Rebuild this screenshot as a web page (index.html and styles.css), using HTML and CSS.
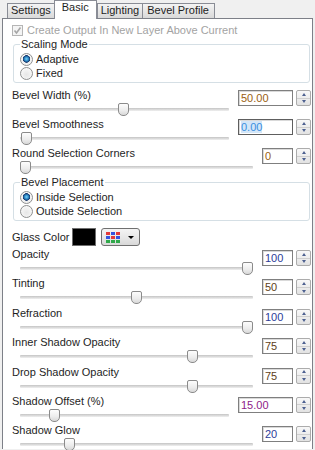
FILE: index.html
```html
<!DOCTYPE html>
<html lang="en">
  <head>
    <meta charset="UTF-8">
    <title>Glass Bevel - Basic</title>
    <link rel="stylesheet" href="styles.css">
  </head>
  <body>
    <div class="tabs">
      <div class="tab">Settings</div>
      <div class="tab tab-active">Basic</div>
      <div class="tab">Lighting</div>
      <div class="tab">Bevel Profile</div>
    </div>

    <div class="panel">
      <div class="check disabled">
        <span class="checkbox">
          <svg width="9" height="9" viewBox="0 0 9 9"><polyline points="1.5,4.5 3.5,7 7.5,1.5" fill="none" stroke="#a6a6a6" stroke-width="1.6"/></svg>
        </span>
        Create Output In New Layer Above Current
      </div>

      <fieldset class="group">
        <legend>Scaling Mode</legend>
        <div class="radio-row"><span class="radio on"></span>Adaptive</div>
        <div class="radio-row"><span class="radio"></span>Fixed</div>
      </fieldset>

      <div class="field">
        <div class="label">Bevel Width (%)</div>
        <div class="slider"><div class="track"></div><span class="thumb" style="left: 98px"></span></div>
        <div class="spin"><div class="num wide c-orange">50.00</div><div class="updown"><span class="up"></span><span class="down"></span></div></div>
      </div>
      <div class="field">
        <div class="label">Bevel Smoothness</div>
        <div class="slider"><div class="track"></div><span class="thumb" style="left: 1px"></span></div>
        <div class="spin"><div class="num wide focus"><span class="sel">0.00</span></div><div class="updown"><span class="up"></span><span class="down"></span></div></div>
      </div>
      <div class="field">
        <div class="label">Round Selection Corners</div>
        <div class="slider"><div class="track"></div><span class="thumb" style="left: 0px"></span></div>
        <div class="spin"><div class="num c-orange">0</div><div class="updown"><span class="up"></span><span class="down"></span></div></div>
      </div>

      <fieldset class="group group-placement">
        <legend>Bevel Placement</legend>
        <div class="radio-row"><span class="radio on"></span>Inside Selection</div>
        <div class="radio-row"><span class="radio"></span>Outside Selection</div>
      </fieldset>

      <div class="color-row">
        <span class="color-label">Glass Color</span>
        <span class="swatch"></span>
        <span class="picker">
          <span class="palette">
            <i class="r"></i><i class="b"></i><i class="r"></i>
            <i class="b"></i><i class="r"></i><i class="b"></i>
            <i class="g"></i><i class="g"></i><i class="g"></i>
          </span>
          <span class="caret"></span>
        </span>
      </div>

      <div class="field field-low">
        <div class="label">Opacity</div>
        <div class="slider"><div class="track"></div><span class="thumb" style="left: 222px"></span></div>
        <div class="spin"><div class="num c-blue">100</div><div class="updown"><span class="up"></span><span class="down"></span></div></div>
      </div>
      <div class="field field-low">
        <div class="label">Tinting</div>
        <div class="slider"><div class="track"></div><span class="thumb" style="left: 111px"></span></div>
        <div class="spin"><div class="num c-brown">50</div><div class="updown"><span class="up"></span><span class="down"></span></div></div>
      </div>
      <div class="field field-low">
        <div class="label">Refraction</div>
        <div class="slider"><div class="track"></div><span class="thumb" style="left: 222px"></span></div>
        <div class="spin"><div class="num c-blue">100</div><div class="updown"><span class="up"></span><span class="down"></span></div></div>
      </div>
      <div class="field field-low">
        <div class="label">Inner Shadow Opacity</div>
        <div class="slider"><div class="track"></div><span class="thumb" style="left: 167px"></span></div>
        <div class="spin"><div class="num c-brown">75</div><div class="updown"><span class="up"></span><span class="down"></span></div></div>
      </div>
      <div class="field field-low">
        <div class="label">Drop Shadow Opacity</div>
        <div class="slider"><div class="track"></div><span class="thumb" style="left: 167px"></span></div>
        <div class="spin"><div class="num c-brown">75</div><div class="updown"><span class="up"></span><span class="down"></span></div></div>
      </div>
      <div class="field field-low">
        <div class="label">Shadow Offset (%)</div>
        <div class="slider"><div class="track"></div><span class="thumb" style="left: 29px"></span></div>
        <div class="spin"><div class="num wide c-magenta">15.00</div><div class="updown"><span class="up"></span><span class="down"></span></div></div>
      </div>
      <div class="field field-low">
        <div class="label">Shadow Glow</div>
        <div class="slider"><div class="track"></div><span class="thumb" style="left: 44px"></span></div>
        <div class="spin"><div class="num c-blue">20</div><div class="updown"><span class="up"></span><span class="down"></span></div></div>
      </div>
    </div>
  </body>
</html>
```

FILE: styles.css
```css
body {
  margin: 0;
  width: 315px;
  height: 450px;
  overflow: hidden;
  background-color: #f0f0f0;
  font-family: "Liberation Sans", Arial, sans-serif;
  font-size: 11px;
  color: #1e1e1e;
}

/* tab strip */
.tabs {
  display: flex;
  align-items: flex-end;
  height: 18px;
  padding-left: 7px;
  position: relative;
  z-index: 1;
}

.tab {
  height: 14px;
  line-height: 12px;
  padding: 0 3px;
  margin-right: -1px;
  border: 1px solid #898c95;
  border-bottom: none;
  background: linear-gradient(#f4f4f4, #e6e6e6 50%, #d9d9d9);
  white-space: nowrap;
}

.tab:last-child {
  padding: 0 5px 0 4px;
}

.tab-active {
  height: 18px;
  margin: 0 0 -1px 0;
  padding: 0 7px;
  background: #ffffff;
  position: relative;
}

/* page body */
.panel {
  margin: 0 2px;
  height: 431px;
  box-sizing: border-box;
  border: 1px solid #7d8088;
  border-bottom: none;
  background-color: #ffffff;
  padding: 4px 1px 0 9px;
}

.check {
  display: flex;
  align-items: center;
  height: 14px;
  gap: 4px;
}

.disabled {
  color: #a3a3a3;
}

.checkbox {
  width: 11px;
  height: 11px;
  box-sizing: border-box;
  border: 1px solid #b5b5b5;
  background: #f4f4f4;
  display: flex;
  align-items: center;
  justify-content: center;
}

/* group boxes */
.group {
  margin: 1px 1px 0 1px;
  padding: 0 6px 2px 6px;
  border: 1px solid #d5dfe5;
  border-radius: 3px;
}

.group legend {
  padding: 0 1px;
  line-height: 12px;
  margin-bottom: 2px;
}

.group-placement {
  margin-top: 1px;
}

.radio-row {
  display: flex;
  align-items: center;
  gap: 3px;
  height: 14px;
}

.radio {
  width: 13px;
  height: 13px;
  box-sizing: border-box;
  border-radius: 50%;
  border: 1px solid #8e8f8f;
  background: radial-gradient(circle at 50% 60%, #e6e6e6, #f7f7f7 70%);
}

.radio.on {
  background:
    radial-gradient(circle at 50% 45%, #7fd0f5 0, #2a8ac8 2px, #16356a 3.5px, transparent 4px),
    radial-gradient(circle at 50% 60%, #e6e6e6, #f7f7f7 70%);
}

/* slider rows */
.field {
  display: grid;
  grid-template-columns: 1fr auto;
  grid-template-rows: 14px 15px;
  height: 29px;
}

.field:first-of-type,
.group + .field {
  margin-top: 5px;
}

.field-low {
  height: 29.4px;
}

.label {
  grid-column: 1;
  grid-row: 1;
  line-height: 14px;
  white-space: nowrap;
}

.slider {
  grid-column: 1;
  grid-row: 2;
  position: relative;
  margin: 0 9px 0 8px;
}

.track {
  margin-top: 6px;
  height: 3px;
  background: linear-gradient(#c4c4c4, #dedede 60%, #f0f0f0);
  border-radius: 1px;
}

.thumb {
  position: absolute;
  top: 1px;
  width: 11px;
  height: 13px;
  box-sizing: border-box;
  border: 1px solid #8b8b8b;
  border-radius: 2px 2px 5px 5px;
  background: linear-gradient(#fdfdfd, #ececec 60%, #d8d8d8);
}

.spin {
  grid-column: 2;
  grid-row: 1 / 3;
  align-self: start;
  margin-top: 2px;
  display: flex;
  gap: 3px;
}

.field-low .spin {
  margin-top: 3px;
}

.num {
  width: 31px;
  height: 16px;
  box-sizing: border-box;
  border: 1px solid #7f7f7f;
  box-shadow: inset 1px 1px 0 #d9d9d9;
  background: #ffffff;
  padding-left: 2px;
  line-height: 14px;
}

.num.wide {
  width: 55px;
}

.num.focus {
  border-color: #5e5e5e;
}

.sel {
  background: #d3e6f8;
  color: #3a8fe0;
}

.c-orange { color: #9a5e12; }
.c-blue { color: #2c3c98; }
.c-brown { color: #5e3e18; }
.c-magenta { color: #8e1a88; }

.updown {
  width: 15px;
  height: 16px;
  box-sizing: border-box;
  border: 1px solid #acacac;
  border-radius: 2px;
  background: linear-gradient(#f8f8f8, #e2e2e2);
  display: flex;
  flex-direction: column;
}

.updown span {
  flex: 1;
  display: flex;
  align-items: center;
  justify-content: center;
}

.updown .down {
  border-top: 1px solid #cfcfcf;
}

.updown .up::before,
.updown .down::before {
  content: "";
  border-left: 2.5px solid transparent;
  border-right: 2.5px solid transparent;
}

.updown .up::before {
  border-bottom: 3px solid #4d6090;
}

.updown .down::before {
  border-top: 3px solid #4d6090;
}

/* glass colour */
.color-row {
  display: flex;
  align-items: center;
  height: 18px;
  margin: 7px 0 1px 0;
}

.color-label {
  width: 60px;
}

.swatch {
  width: 24px;
  height: 18px;
  box-sizing: border-box;
  border: 1px solid #6e6e6e;
  background: #000000;
}

.picker {
  margin-left: 5px;
  width: 39px;
  height: 18px;
  box-sizing: border-box;
  border: 1px solid #707070;
  border-radius: 3px;
  background: linear-gradient(#f4f4f4, #e8e8e8 50%, #d8d8d8);
  display: flex;
  align-items: center;
  padding-left: 4px;
  gap: 8px;
}

.palette {
  display: grid;
  grid-template-columns: repeat(3, 4px);
  grid-auto-rows: 3px;
  gap: 1px;
}

.palette i { display: block; }
.palette .r { background: #e33a3a; }
.palette .b { background: #3453e0; }
.palette .g { background: #2fa84a; }

.caret {
  border-left: 3px solid transparent;
  border-right: 3px solid transparent;
  border-top: 3px solid #000000;
}
```
